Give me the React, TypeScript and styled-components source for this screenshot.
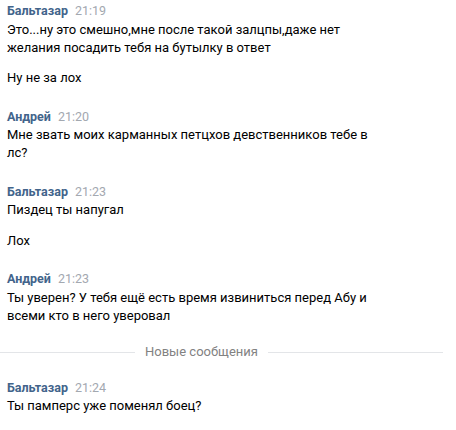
import styled, { createGlobalStyle } from "styled-components";

const GlobalStyle = createGlobalStyle`
    body {
        margin: 0;
        background: #ffffff;
        font-family: Roboto, "Liberation Sans", Arial, sans-serif;
        -webkit-font-smoothing: antialiased;
    }
`

const History = styled.div`
    width: 456px;
    padding-top: 2px;
    display: flex;
    flex-direction: column;
    gap: 20.5px;
`

const Group = styled.div`
    padding: 0 7px;
`

const Header = styled.div`
    height: 18px;
    line-height: 18px;
    display: flex;
    align-items: baseline;
    gap: 7px;
`

const Author = styled.a`
    font-size: 12.5px;
    font-weight: 700;
    color: #42648b;
`

const Time = styled.span`
    font-size: 12.5px;
    color: #a3a8b0;
`

const Text = styled.div<{ first: boolean }>`
    font-size: 13px;
    line-height: 18px;
    color: #000000;
    margin-top: ${props => props.first ? "0.5px" : "12.5px"};
    white-space: pre-line;
`

const Divider = styled.div`
    display: flex;
    align-items: center;
    height: 12px;
    margin-top: 1px;
`

const Line = styled.div<{ w: number }>`
    width: ${props => props.w}px;
    height: 1px;
    background: #e3e5e8;
`

const DividerText = styled.span`
    font-size: 13px;
    line-height: 12px;
    color: #828282;
    margin: 0 10px;
`

type Msg = { author: string; time: string; texts: string[] }

const before: Msg[] = [
    {
        author: "Бальтазар",
        time: "21:19",
        texts: [
            "Это...ну это смешно,мне после такой залцпы,даже нет\nжелания посадить тебя на бутылку в ответ",
            "Ну не за лох",
        ],
    },
    {
        author: "Андрей",
        time: "21:20",
        texts: ["Мне звать моих карманных петцхов девственников тебе в\nлс?"],
    },
    {
        author: "Бальтазар",
        time: "21:23",
        texts: ["Пиздец ты напугал", "Лох"],
    },
    {
        author: "Андрей",
        time: "21:23",
        texts: ["Ты уверен? У тебя ещё есть время извиниться перед Абу и\nвсеми кто в него уверовал"],
    },
]

const after: Msg[] = [
    {
        author: "Бальтазар",
        time: "21:24",
        texts: ["Ты памперс уже поменял боец?"],
    },
]

const MessageGroup = ({ msg }: { msg: Msg }) => (
    <Group>
        <Header>
            <Author>{msg.author}</Author>
            <Time>{msg.time}</Time>
        </Header>
        {msg.texts.map((t, i) => (
            <Text key={i} first={i == 0}>{t}</Text>
        ))}
    </Group>
)

export default function App() {
    return (
        <>
            <GlobalStyle />
            <History>
                {before.map((m, i) => <MessageGroup key={i} msg={m} />)}
                <Divider>
                    <Line w={135} />
                    <DividerText>Новые сообщения</DividerText>
                    <Line w={175} />
                </Divider>
                {after.map((m, i) => <MessageGroup key={i} msg={m} />)}
            </History>
        </>
    )
}
